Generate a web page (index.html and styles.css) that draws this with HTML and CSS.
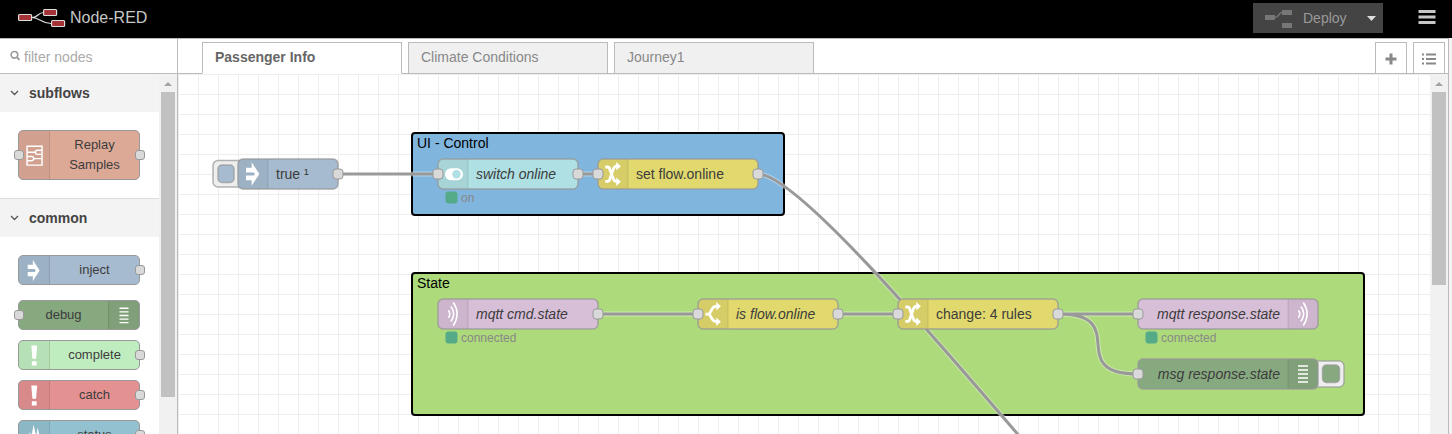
FILE: index.html
```html
<!DOCTYPE html>
<html lang="en">
<head>
<meta charset="utf-8">
<title>Node-RED</title>
<link rel="stylesheet" href="styles.css">
</head>
<body>
<svg class="defs" width="0" height="0" aria-hidden="true">
  <symbol id="i-inject" viewBox="0 0 20 30"><path d="M3 8.700h5.700V3.200L16.300 15 8.700 26.800v-5.500H3v-4.700h7.800L12 15l-1.200-1.600H3z"/></symbol>
  <symbol id="i-change" viewBox="0 0 20 30"><path class="ln" d="M2.300 8h2.200q1.600 0 2.300 2.200l3.500 9.600q1 2.900 3.700 2.900M2.300 22.300h2.200q1.600 0 2.300-2.200l3.500-10q1-2.900 3.700-2.900"/><path d="M13.300 3l4.600 4.200-4.600 4.200zM13.300 18.500l4.600 4.200-4.600 4.200z"/></symbol>
  <symbol id="i-switch" viewBox="0 0 20 30"><path class="ln" d="M2.500 15.200H7M6.300 15.200l3-5.500q1.300-2.500 5-2.500M6.300 15.200l3 5q1.300 2.500 5 2.500"/><path d="M13.300 3l4.600 4.200-4.600 4.200zM13.300 18.500l4.600 4.200-4.600 4.200z"/></symbol>
  <symbol id="i-wave" viewBox="0 0 20 30"><path class="thin" d="M5.400 11.200q2.800 3.800 0 7.600M7.900 7.600q5.600 7.400 0 14.800M10.300 3.500q7.600 11.500 0 23"/></symbol>
  <symbol id="i-debug" viewBox="0 0 20 30"><path d="M5 6.200h10v1.500H5zm0 4h10v1.500H5zm0 4h10v1.500H5zm0 4h10v1.500H5zm0 4h10v1.500H5z"/></symbol>
  <symbol id="i-alert" viewBox="0 0 20 30"><path d="M7 4h6.500l-1.200 14.500H8.200zM7.600 21.500h5.300v4.500H7.600z"/></symbol>
  <symbol id="i-status" viewBox="0 0 20 30"><path d="M2 24l3.500-13 1.700 5L9.500 3l3 13L14 6l4 18z"/></symbol>
  <symbol id="i-toggle" viewBox="0 0 20 30"><rect x="2" y="9.300" width="18" height="12" rx="6"/><circle class="cut" cx="13.500" cy="15.300" r="4.200"/></symbol>
  <symbol id="i-sub" viewBox="0 0 20 30"><path class="box" d="M2.800 6h14.500v18.300H2.800zM3 11.900h8M9.300 18H17"/><path class="box" d="M17.300 9.900h-4.500q-2 0-2 2t2 2h4.500M2.800 16h4.500q2 0 2 2t-2 2H2.800"/></symbol>
</svg>

<header class="header">
  <div class="brand">
    <svg width="48" height="20" viewBox="18 9 48 20"><g fill="none" stroke="#ddd" stroke-width="1.200"><path d="M32 18.500c7 0 5-5 12-5M32 18.500c8 0 9 6 19 6"/><g fill="#a33336"><rect x="18.600" y="15.500" width="13" height="6" rx="1"/><rect x="43.600" y="10.500" width="13" height="6" rx="1"/><rect x="51.600" y="21.500" width="13" height="6" rx="1"/></g></g></svg>
    <span>Node-RED</span>
  </div>
  <div class="actions">
    <div class="deploy">
      <svg width="28" height="20" viewBox="0 0 28 20"><path fill="#777" d="M0 7h10v5H0zM17 2h10v5H17zM17 15h10v5H17z"/><path d="M10 9.500c4 0 3.500-5 7-5" fill="none" stroke="#777" stroke-width="1.500"/></svg>
      <span>Deploy</span>
      <svg class="caret" width="9" height="5" viewBox="0 0 9 5"><path d="M0 0h9L4.500 5z" fill="#ddd"/></svg>
    </div>
    <svg width="18" height="16" viewBox="0 0 18 16"><path d="M.5 2.500h17M.5 8h17M.5 13.500h17" stroke="#c7c7c7" stroke-width="3"/></svg>
  </div>
</header>

<main class="main">
  <aside class="palette">
    <div class="search">
      <svg width="11" height="11" viewBox="0 0 11 11" fill="none" stroke="#999"><circle cx="4.400" cy="4.800" r="3.300" stroke-width="1.600"/><path d="M6.800 7.200l2.700 2.700" stroke-width="1.800"/></svg>
      <span>filter nodes</span>
    </div>
    <div class="palette-body">
      <div class="list">
        <div class="category"><svg width="9" height="6" viewBox="0 0 9 6"><path d="M1 1l3.500 3.500L8 1" fill="none" stroke="#555" stroke-width="1.300"/></svg>subflows</div>
        <div class="nodes sub">
          <div class="pnode tall salmon"><i class="pin l"></i><span class="ic big"><svg><use href="#i-sub"/></svg></span><b>Replay Samples</b><i class="pin r"></i></div>
        </div>
        <div class="category ruled"><svg width="9" height="6" viewBox="0 0 9 6"><path d="M1 1l3.500 3.500L8 1" fill="none" stroke="#555" stroke-width="1.300"/></svg>common</div>
        <div class="nodes">
          <div class="pnode blue first"><span class="ic"><svg><use href="#i-inject"/></svg></span><b>inject</b><i class="pin r"></i></div>
          <div class="pnode olive"><i class="pin l"></i><b>debug</b><span class="ic end"><svg><use href="#i-debug"/></svg></span></div>
          <div class="pnode mint"><span class="ic"><svg><use href="#i-alert"/></svg></span><b>complete</b><i class="pin r"></i></div>
          <div class="pnode red"><span class="ic"><svg><use href="#i-alert"/></svg></span><b>catch</b><i class="pin r"></i></div>
          <div class="pnode teal"><span class="ic"><svg><use href="#i-status"/></svg></span><b>status</b><i class="pin r"></i></div>
        </div>
      </div>
      <div class="scroll"><svg width="8" height="4" viewBox="0 0 8 4"><path d="M0 4h8L4 0z" fill="#a3a3a3"/></svg><div class="thumb long"></div></div>
    </div>
  </aside>

  <section class="workspace">
    <nav class="tabs">
      <div class="tab active">Passenger Info</div>
      <div class="tab">Climate Conditions</div>
      <div class="tab">Journey1</div>
      <div class="tools">
        <div class="tool"><svg width="12" height="12" viewBox="0 0 12 12"><path d="M6 .5v11M.5 6h11" stroke="#888" stroke-width="3"/></svg></div>
        <div class="tool"><svg width="14" height="12" viewBox="0 0 14 12"><path d="M0 1.500h2M0 6h2M0 10.500h2M4 1.500h10M4 6h10M4 10.500h10" stroke="#888" stroke-width="2"/></svg></div>
      </div>
    </nav>
    <div class="canvas">
      <svg class="flow" width="1252" height="360" viewBox="178 74 1252 360">
        <defs><pattern id="grid" x="178" y="74" width="20" height="20" patternUnits="userSpaceOnUse"><path d="M0 .5h20M.5 0v20" stroke="#eee"/></pattern></defs>
        <rect x="178" y="74" width="1252" height="360" fill="url(#grid)"/>
        <g class="group">
          <rect x="412" y="133" width="372" height="82" rx="3" fill="#80b5de"/>
          <rect x="412" y="273" width="952" height="142" rx="3" fill="#addb7b"/>
          <text x="417" y="148">UI - Control</text>
          <text x="417" y="288">State</text>
        </g>
        <g class="halo">
          <path d="M338 174H438M578 174H598M598 314H698M838 314H898M1058 314H1138M1058 314C1133 314 1063 374 1138 374M758 174C832 174 1263 764 1338 764"/>
        </g>
        <g class="wire">
          <path d="M338 174H438M578 174H598M598 314H698M838 314H898M1058 314H1138M1058 314C1133 314 1063 374 1138 374M758 174C832 174 1263 764 1338 764"/>
        </g>

        <g class="button"><rect x="213" y="160.500" width="32" height="26.500" rx="5"/><rect x="218" y="165" width="16" height="17.500" rx="4" fill="#a6bbcf"/></g>
        <g class="button"><rect x="1312" y="361" width="32" height="26" rx="5"/><rect x="1322.500" y="365" width="17" height="17.500" rx="4" fill="#87a980"/></g>

        <g class="node" style="--c:#a6bbcf"><rect class="body" x="238" y="159" width="100" height="30" rx="5"/><path class="shade" d="M268 159.500v29h-25q-4.500 0-4.500-4.500v-20q0-4.500 4.500-4.500z"/><path class="rule" d="M268 159.500v29"/><use href="#i-inject" x="243" y="159" width="20" height="30"/><text x="276" y="179">true ¹</text><rect class="port" x="333" y="169" width="10" height="10" rx="3"/></g>
        <g class="node" style="--c:#afe0e3"><rect class="body" x="438" y="159" width="140" height="30" rx="5"/><path class="shade" d="M468 159.500v29h-25q-4.500 0-4.500-4.500v-20q0-4.500 4.500-4.500z"/><path class="rule" d="M468 159.500v29"/><use href="#i-toggle" x="443" y="159" width="20" height="30"/><text class="it" x="476" y="179">switch online</text><rect class="port" x="433" y="169" width="10" height="10" rx="3"/><rect class="port" x="573" y="169" width="10" height="10" rx="3"/></g>
        <g class="node" style="--c:#e2d96e"><rect class="body" x="598" y="159" width="160" height="30" rx="5"/><path class="shade" d="M628 159.500v29h-25q-4.500 0-4.500-4.500v-20q0-4.500 4.500-4.500z"/><path class="rule" d="M628 159.500v29"/><use href="#i-change" x="603" y="159" width="20" height="30"/><text x="636" y="179">set flow.online</text><rect class="port" x="593" y="169" width="10" height="10" rx="3"/><rect class="port" x="753" y="169" width="10" height="10" rx="3"/></g>
        <g class="node" style="--c:#d8bfd8"><rect class="body" x="438" y="299" width="160" height="30" rx="5"/><path class="shade" d="M468 299.500v29h-25q-4.500 0-4.500-4.500v-20q0-4.500 4.500-4.500z"/><path class="rule" d="M468 299.500v29"/><use href="#i-wave" x="443" y="299" width="20" height="30"/><text class="it" x="476" y="319">mqtt cmd.state</text><rect class="port" x="593" y="309" width="10" height="10" rx="3"/></g>
        <g class="node" style="--c:#e2d96e"><rect class="body" x="698" y="299" width="140" height="30" rx="5"/><path class="shade" d="M728 299.500v29h-25q-4.500 0-4.500-4.500v-20q0-4.500 4.500-4.500z"/><path class="rule" d="M728 299.500v29"/><use href="#i-switch" x="703" y="299" width="20" height="30"/><text class="it" x="736" y="319">is flow.online</text><rect class="port" x="693" y="309" width="10" height="10" rx="3"/><rect class="port" x="833" y="309" width="10" height="10" rx="3"/></g>
        <g class="node" style="--c:#e2d96e"><rect class="body" x="898" y="299" width="160" height="30" rx="5"/><path class="shade" d="M928 299.500v29h-25q-4.500 0-4.500-4.500v-20q0-4.500 4.500-4.500z"/><path class="rule" d="M928 299.500v29"/><use href="#i-change" x="903" y="299" width="20" height="30"/><text x="936" y="319">change: 4 rules</text><rect class="port" x="893" y="309" width="10" height="10" rx="3"/><rect class="port" x="1053" y="309" width="10" height="10" rx="3"/></g>
        <g class="node" style="--c:#d8bfd8"><rect class="body" x="1138" y="299" width="180" height="30" rx="5"/><path class="shade" d="M1288 299.500v29h25q4.500 0 4.500-4.500v-20q0-4.500-4.500-4.500z"/><path class="rule" d="M1288 299.500v29"/><use href="#i-wave" x="1293" y="299" width="20" height="30"/><text class="it end" x="1280" y="319">mqtt response.state</text><rect class="port" x="1133" y="309" width="10" height="10" rx="3"/></g>
        <g class="node" style="--c:#87a980"><rect class="body" x="1138" y="359" width="180" height="30" rx="5"/><path class="shade" d="M1288 359.500v29h25q4.500 0 4.500-4.500v-20q0-4.500-4.500-4.500z"/><path class="rule" d="M1288 359.500v29"/><use href="#i-debug" x="1293" y="359" width="20" height="30"/><text class="it end" x="1280" y="379">msg response.state</text><rect class="port" x="1133" y="369" width="10" height="10" rx="3"/></g>

        <g class="state">
          <rect x="445.500" y="191.500" width="12" height="12" rx="3"/><text x="461" y="202">on</text>
          <rect x="445.500" y="331.500" width="12" height="12" rx="3"/><text x="461" y="342">connected</text>
          <rect x="1145.500" y="331.500" width="12" height="12" rx="3"/><text x="1161" y="342">connected</text>
        </g>
      </svg>
      <div class="scroll"><svg width="8" height="4" viewBox="0 0 8 4"><path d="M0 4h8L4 0z" fill="#a3a3a3"/></svg><div class="thumb short"></div></div>
    </div>
  </section>
</main>
</body>
</html>
```
FILE: styles.css
```css
* { box-sizing: border-box; }
body {
  margin: 0;
  height: 434px;
  overflow: hidden;
  display: flex;
  flex-direction: column;
  background: #f3f3f3;
  font: 14px/20px "Liberation Sans", Arial, sans-serif;
  color: #444;
}
svg { display: block; flex: none; }
.defs { position: absolute; }

.header {
  height: 38px;
  flex: none;
  background: #000;
  display: flex;
  justify-content: space-between;
  padding: 0 16px 0 18px;
}
.brand { display: flex; align-items: center; gap: 4px; color: #c7c7c7; font-size: 16px; padding-bottom: 2px; }
.actions { display: flex; align-items: flex-start; gap: 35px; padding-top: 3px; }
.actions > svg { margin-top: 6px; }
.deploy {
  width: 130px;
  height: 30px;
  background: #444;
  color: #999;
  display: flex;
  align-items: center;
  padding-left: 12px;
}
.deploy > span { margin-left: 10px; }
.deploy .caret { margin-left: 20px; }

.main { flex: 1; min-height: 0; display: flex; padding-right: 3px; }
.palette {
  width: 178px;
  flex: none;
  display: flex;
  flex-direction: column;
  border-top: 1px solid #bbb;
  border-right: 1px solid #bbb;
  background: #fff;
}
.search {
  height: 35px;
  flex: none;
  display: flex;
  align-items: center;
  gap: 3px;
  padding: 1px 0 0 10px;
  border-bottom: 1px solid #bbb;
  color: #aaa;
}
.search svg { margin-bottom: 2px; }
.palette-body { flex: 1; min-height: 0; display: flex; }
.list { width: 159px; overflow: hidden; }
.category {
  height: 38px;
  display: flex;
  align-items: center;
  gap: 10px;
  padding-left: 10px;
  background: #f3f3f3;
  font-weight: bold;
}
.category.ruled { height: 39px; border-top: 1px solid #ddd; }
.nodes { padding: 18px 0 0 18px; display: flex; flex-direction: column; gap: 10px; }
.nodes.sub { height: 86px; }
.pnode {
  position: relative;
  width: 122px;
  height: 30px;
  flex: none;
  display: flex;
  border: 1px solid #999;
  border-radius: 5px;
}
.pnode.tall { height: 50px; }
.pnode.first { margin-bottom: 5px; }
.pnode b {
  flex: 1;
  font-weight: normal;
  font-size: 13px;
  text-align: center;
  align-self: center;
  padding: 0 12px;
  color: #3c3c3c;
}
.ic {
  width: 31px;
  display: flex;
  align-items: center;
  justify-content: center;
  background: rgba(0, 0, 0, .05);
  border-right: 1px solid rgba(0, 0, 0, .1);
  border-radius: 4px 0 0 4px;
}
.ic.end { border-right: 0; border-left: 1px solid rgba(0, 0, 0, .1); border-radius: 0 4px 4px 0; }
.ic svg { width: 18px; height: 27px; }
.ic.big svg { width: 21px; height: 31px; }
.pin {
  position: absolute;
  top: calc(50% - 5px);
  width: 10px;
  height: 10px;
  background: #d9d9d9;
  border: 1px solid #999;
  border-radius: 3px;
}
.pin.l { left: -5px; }
.pin.r { right: -6px; }
.salmon { --c: #dda997; background: var(--c); }
.blue { --c: #a6bbcf; background: var(--c); }
.olive { --c: #87a980; background: var(--c); }
.mint { --c: #c0edc0; background: var(--c); }
.red { --c: #e49191; background: var(--c); }
.teal { --c: #94c1d0; background: var(--c); }

.scroll {
  width: 18px;
  flex: none;
  background: #f1f1f1;
  display: flex;
  flex-direction: column;
  align-items: center;
  gap: 6px;
  padding-top: 8px;
}
.thumb { width: 14px; background: #c1c1c1; }
.thumb.long { height: 305px; }
.thumb.short { height: 193px; }

.workspace {
  flex: 1;
  min-width: 0;
  display: flex;
  flex-direction: column;
  background: #fff;
  border-top: 1px solid #bbb;
  border-right: 1px solid #bbb;
}
.tabs {
  height: 35px;
  flex: none;
  display: flex;
  align-items: stretch;
  gap: 6px;
  padding: 3px 3px 0 24px;
  box-shadow: inset 0 -1px #bbb;
}
.tab {
  width: 200px;
  border: 1px solid #bbb;
  background: #f0f0f0;
  padding: 4px 12px 0;
  color: #888;
}
.tab.active { background: #fff; border-bottom-color: #fff; color: #666; font-weight: bold; }
.tools { margin-left: auto; display: flex; gap: 6px; }
.tool { width: 32px; border: 1px solid #bbb; display: flex; align-items: center; justify-content: center; padding-top: 2px; }
.canvas { flex: 1; min-height: 0; display: flex; }

.group rect { stroke: #000; stroke-width: 2; }
.group text { fill: #000; }
.halo { fill: none; stroke: #fff; stroke-opacity: .4; stroke-width: 5; }
.wire { fill: none; stroke: #999; stroke-width: 3; }
.button rect { fill: #eee; stroke: #999; stroke-opacity: .75; stroke-width: 1.5; }
.button rect[fill="#a6bbcf"] { fill: #a6bbcf; }
.button rect[fill="#87a980"] { fill: #87a980; }
.body { fill: var(--c); stroke: #999; stroke-width: 1.5; stroke-opacity: .8; }
.shade { fill: #000; fill-opacity: .05; }
.rule { stroke: #000; stroke-opacity: .1; }
.port { fill: #d9d9d9; stroke: #999; }
.flow text { font-size: 14px; }
.node text { fill: #3c3c3c; }
.it { font-style: italic; }
.flow .end { text-anchor: end; }
.state rect { fill: #5a8; }
.flow .state text { font-size: 12px; fill: #888; }

symbol, use, .ic svg { fill: #fff; }
.cut { fill: var(--c); }
.ln { fill: none; stroke: #fff; stroke-width: 2.8; }
.thin { fill: none; stroke: #fff; stroke-width: 1.6; }
.box { fill: none; stroke: #fff; stroke-width: 1.4; }
```
